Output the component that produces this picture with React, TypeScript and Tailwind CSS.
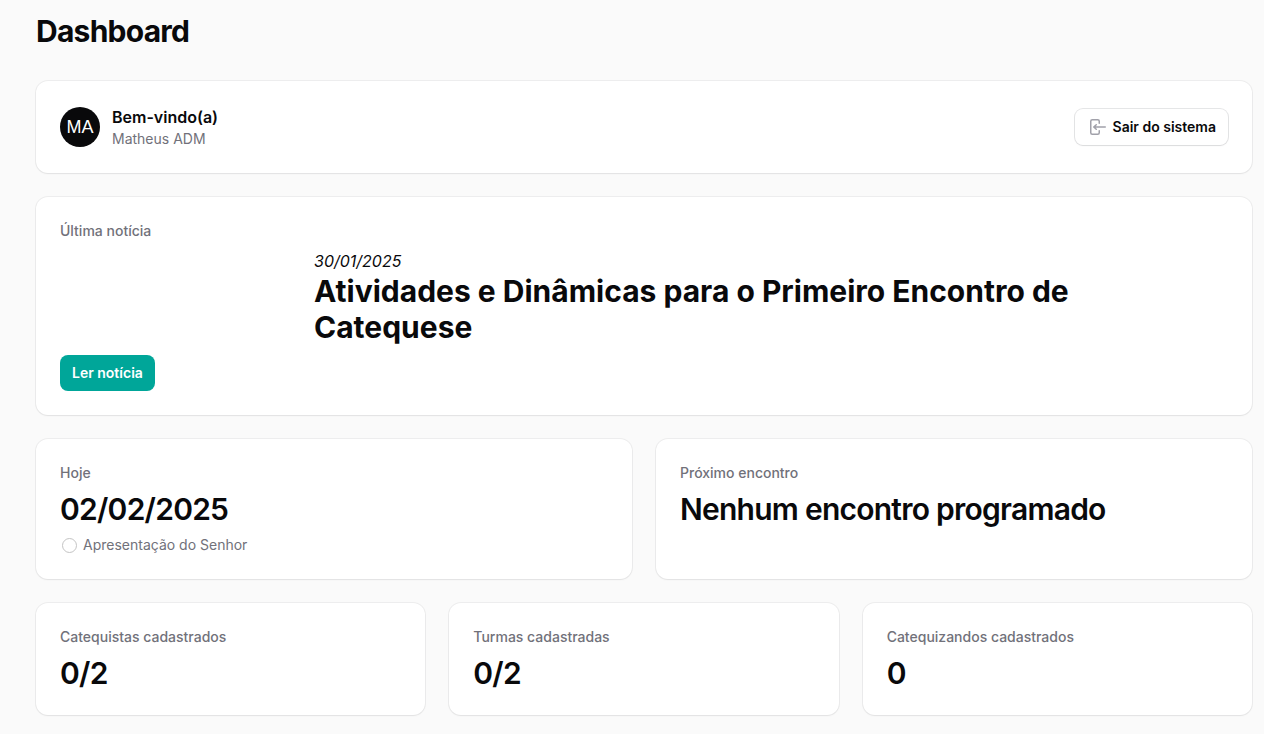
import React from "react";

const card = "rounded-xl bg-white p-6 shadow-xs ring-1 ring-gray-950/5";

function Stat({ label, value, children }: { label: string; value: string; children?: React.ReactNode }) {
  return (
    <section className={card}>
      <div className="grid gap-y-2">
        <h2 className="text-sm font-medium text-[#71717a]">{label}</h2>
        <p className="text-3xl font-semibold tracking-tight text-[#09090b]">{value}</p>
        {children}
      </div>
    </section>
  );
}

function SignOutIcon() {
  return (
    <svg viewBox="0 0 20 20" className="h-5 w-5 text-[#a1a1aa]" fill="currentColor" aria-hidden="true">
      <path fillRule="evenodd" clipRule="evenodd" d="M3 4.25A2.25 2.25 0 0 1 5.25 2h5.5A2.25 2.25 0 0 1 13 4.25v2a.75.75 0 0 1-1.5 0v-2a.75.75 0 0 0-.75-.75h-5.5a.75.75 0 0 0-.75.75v11.5c0 .414.336.75.75.75h5.5a.75.75 0 0 0 .75-.75v-2a.75.75 0 0 1 1.5 0v2A2.25 2.25 0 0 1 10.75 18h-5.5A2.25 2.25 0 0 1 3 15.75V4.25Z" />
      <path fillRule="evenodd" clipRule="evenodd" d="M19 10a.75.75 0 0 0-.75-.75H8.704l1.048-.943a.75.75 0 1 0-1.004-1.114l-2.5 2.25a.75.75 0 0 0 0 1.114l2.5 2.25a.75.75 0 1 0 1.004-1.114l-1.048-.943h9.546A.75.75 0 0 0 19 10Z" />
    </svg>
  );
}

export default function App() {
  return (
    <div className="min-h-screen bg-[#fafafa] font-['Inter',sans-serif] text-[#09090b]">
      <main className="flex flex-col gap-8 pt-[13px] pr-3 pb-4 pl-9">
        <h1 className="text-3xl font-bold tracking-tight">Dashboard</h1>
        <div className="grid gap-6">
          <section className={card}>
            <div className="flex items-center gap-x-3">
              <div className="flex h-10 w-10 items-center justify-center rounded-full bg-[#09090b] font-['Liberation_Sans',sans-serif] text-lg text-white">MA</div>
              <div className="flex-1">
                <h2 className="text-base leading-6 font-semibold">Bem-vindo(a)</h2>
                <p className="text-sm text-[#71717a]">Matheus ADM</p>
              </div>
              <button type="button" className="flex items-center gap-1.5 rounded-lg bg-white px-3 py-2 text-sm font-semibold shadow-xs ring-1 ring-gray-950/10">
                <SignOutIcon />
                Sair do sistema
              </button>
            </div>
          </section>

          <section className={card}>
            <h2 className="text-sm font-medium text-[#71717a]">Última notícia</h2>
            <div className="mt-2 pr-32 pl-[254px]">
              <p className="text-base italic">30/01/2025</p>
              <p className="text-3xl font-bold">Atividades e Dinâmicas para o Primeiro Encontro de Catequese</p>
            </div>
            <button type="button" className="mt-2.5 rounded-lg bg-[#00a699] px-3 py-2 text-sm font-semibold text-white">Ler notícia</button>
          </section>

          <div className="grid grid-cols-2 gap-6">
            <Stat label="Hoje" value="02/02/2025">
              <p className="flex items-center gap-1.5 text-sm text-[#71717a]">
                <span className="ml-0.5 h-[15px] w-[15px] rounded-full border border-[#c4c4c4]" />
                Apresentação do Senhor
              </p>
            </Stat>
            <Stat label="Próximo encontro" value="Nenhum encontro programado" />
          </div>

          <div className="grid grid-cols-3 gap-6">
            <Stat label="Catequistas cadastrados" value="0/2" />
            <Stat label="Turmas cadastradas" value="0/2" />
            <Stat label="Catequizandos cadastrados" value="0" />
          </div>
        </div>
      </main>
    </div>
  );
}
